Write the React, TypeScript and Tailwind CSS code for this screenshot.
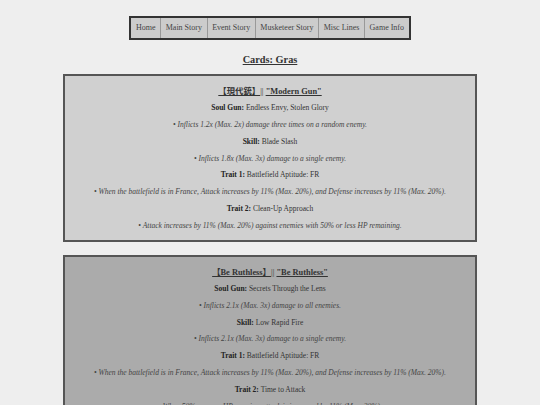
import React from "react";

const nav = ["Home", "Main Story", "Event Story", "Musketeer Story", "Misc Lines", "Game Info"];

type Card = {
  jp: string;
  en: string;
  bg: string;
  rows: { label?: string; value?: string; desc?: string }[];
};

const cards: Card[] = [
  {
    jp: "【現代銃】",
    en: "\"Modern Gun\"",
    bg: "bg-[#d0d0d0]",
    rows: [
      { label: "Soul Gun:", value: "Endless Envy, Stolen Glory" },
      { desc: "• Inflicts 1.2x (Max. 2x) damage three times on a random enemy." },
      { label: "Skill:", value: "Blade Slash" },
      { desc: "• Inflicts 1.8x (Max. 3x) damage to a single enemy." },
      { label: "Trait 1:", value: "Battlefield Aptitude: FR" },
      { desc: "• When the battlefield is in France, Attack increases by 11% (Max. 20%), and Defense increases by 11% (Max. 20%)." },
      { label: "Trait 2:", value: "Clean-Up Approach" },
      { desc: "• Attack increases by 11% (Max. 20%) against enemies with 50% or less HP remaining." },
    ],
  },
  {
    jp: "【Be Ruthless】",
    en: "\"Be Ruthless\"",
    bg: "bg-[#ababab]",
    rows: [
      { label: "Soul Gun:", value: "Secrets Through the Lens" },
      { desc: "• Inflicts 2.1x (Max. 3x) damage to all enemies." },
      { label: "Skill:", value: "Low Rapid Fire" },
      { desc: "• Inflicts 2.1x (Max. 3x) damage to a single enemy." },
      { label: "Trait 1:", value: "Battlefield Aptitude: FR" },
      { desc: "• When the battlefield is in France, Attack increases by 11% (Max. 20%), and Defense increases by 11% (Max. 20%)." },
      { label: "Trait 2:", value: "Time to Attack" },
      { desc: "• When 50% or more HP remains, attack is increased by 11% (Max. 20%)." },
    ],
  },
];

export default function App() {
  return (
    <div
      className="w-[540px] h-[405px] overflow-hidden bg-[#eeeeee] text-[#333] pt-[16px]"
      style={{ fontFamily: '"Liberation Serif", "Noto Sans CJK JP", serif' }}
    >
      <div className="flex justify-center">
        <div className="flex border-2 border-[#333] bg-[#cccccc] h-[24px]">
          {nav.map((n, i) => (
            <div
              key={n}
              className={`flex items-center px-[4.6px] text-[8px] text-[#444] ${i > 0 ? "border-l border-[#999]" : ""}`}
            >
              {n}
            </div>
          ))}
        </div>
      </div>
      <div className="mt-[13px] text-center text-[10.3px] font-bold leading-[14px] underline text-[#333]">
        Cards: Gras
      </div>
      <div className="mt-[7px] flex flex-col gap-[13px] items-center">
        {cards.map((c) => (
          <div key={c.jp} className={`w-[414px] border-2 border-[#555] ${c.bg} pt-[8px] pb-[5px] text-center`}>
            <div className="text-[8.4px] font-bold leading-[16px] text-[#333]">
              <span className="underline">{c.jp}</span>
              <span className="font-normal">|| </span>
              <span className="underline">{c.en}</span>
            </div>
            {c.rows.map((r, i) =>
              r.desc ? (
                <div key={i} className="text-[7.5px] italic leading-[16.86px] text-[#444]">
                  {r.desc}
                </div>
              ) : (
                <div key={i} className="text-[7.5px] leading-[16.86px] text-[#333]">
                  <span className="font-bold text-[#222]">{r.label}</span> {r.value}
                </div>
              )
            )}
          </div>
        ))}
      </div>
    </div>
  );
}
